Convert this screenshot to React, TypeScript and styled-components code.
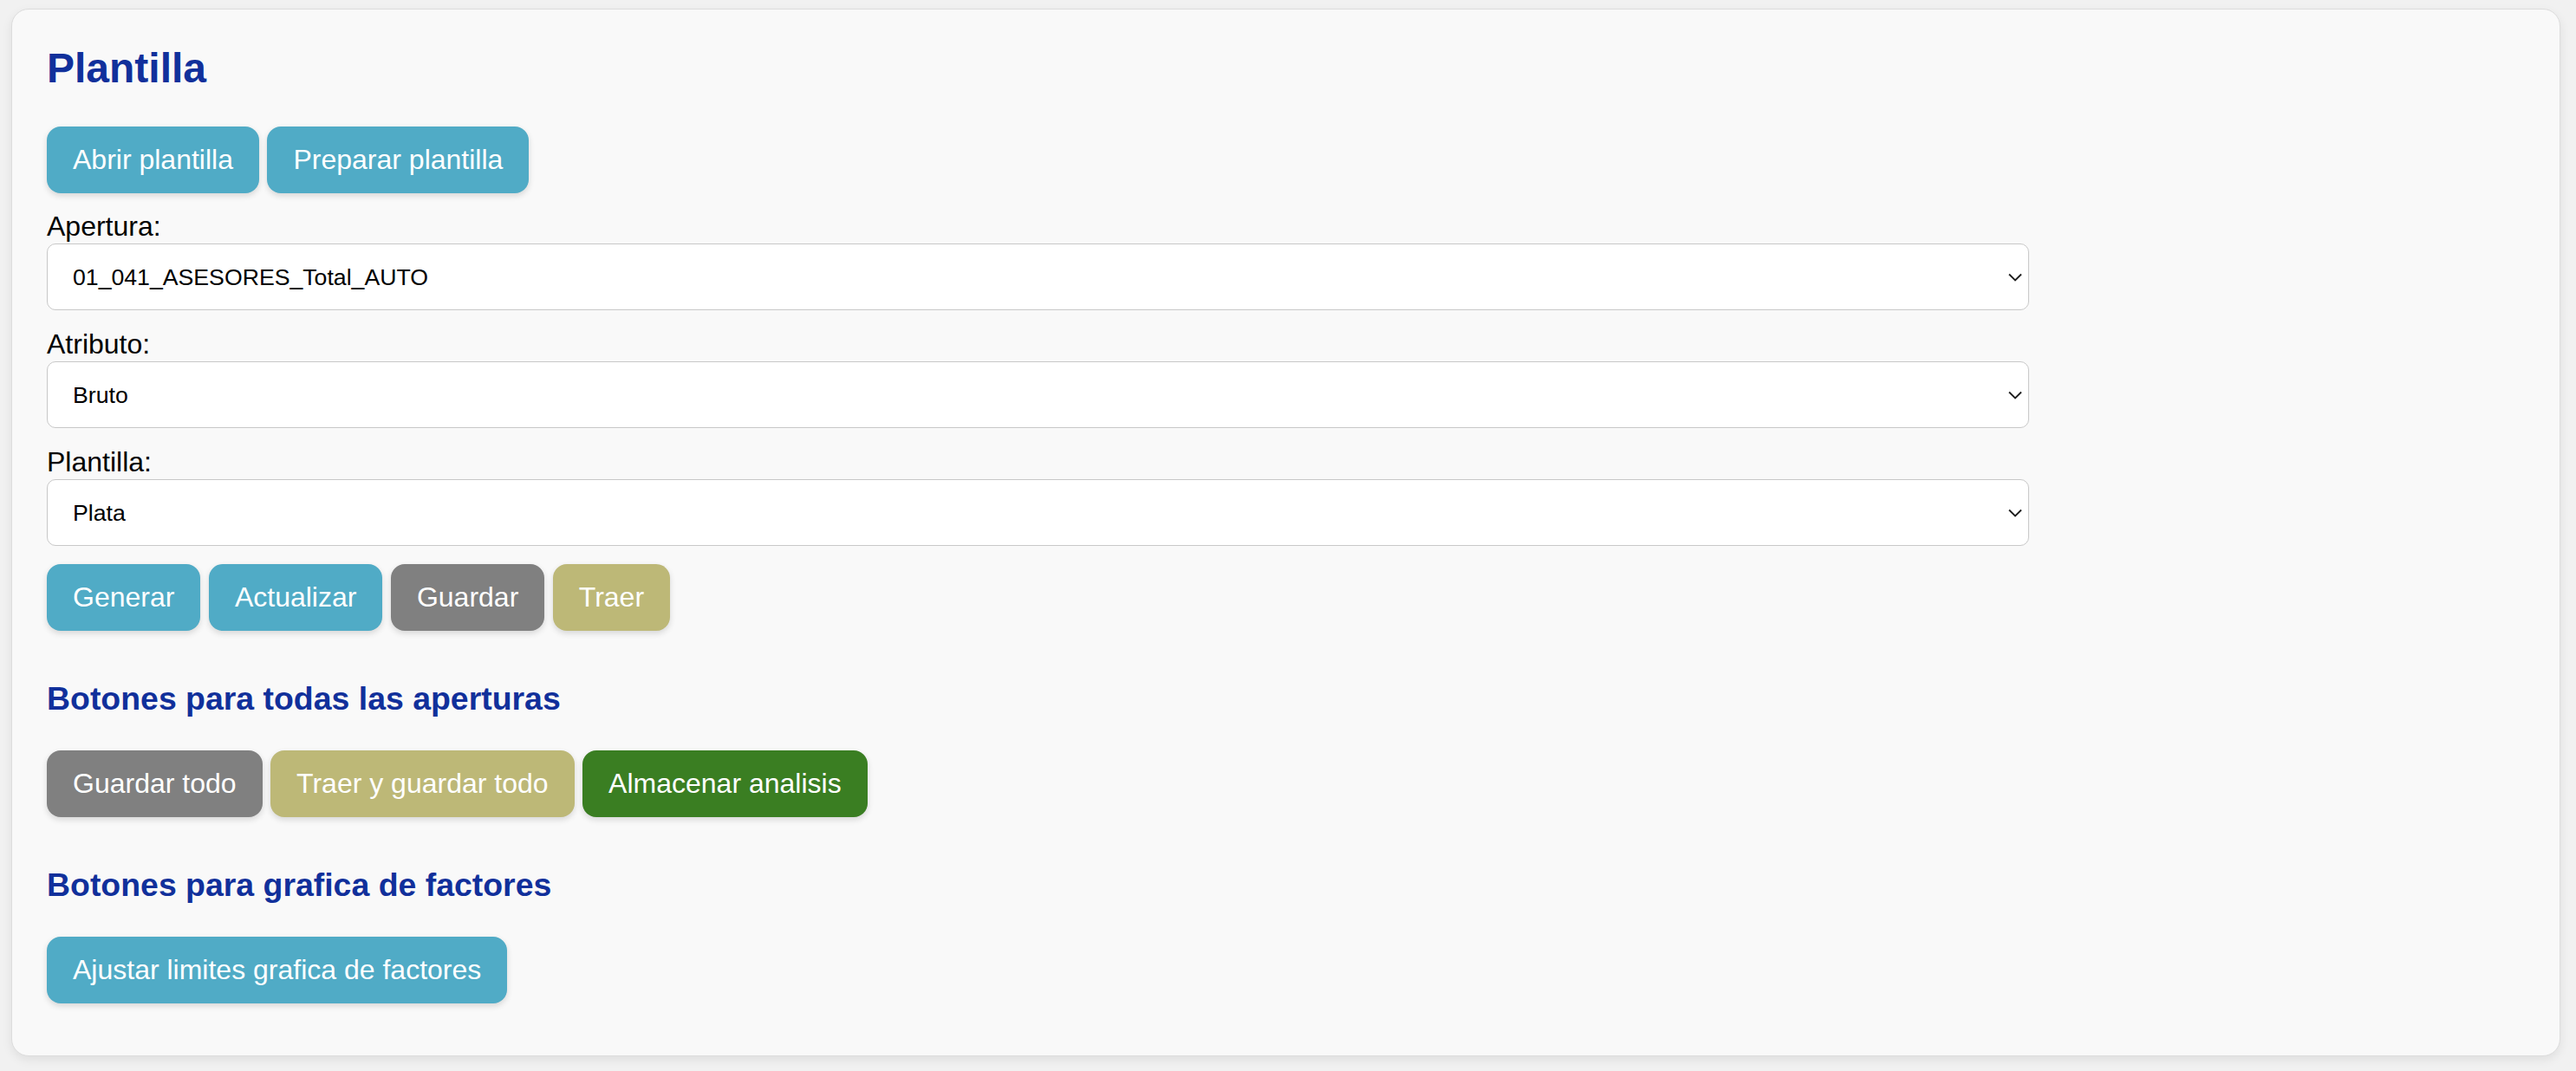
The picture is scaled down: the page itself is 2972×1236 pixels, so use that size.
import React from "react";
import styled, { createGlobalStyle } from "styled-components";

const GlobalStyle = createGlobalStyle`
  html, body {
    margin: 0;
    padding: 0;
    background: #f1f1f1;
  }
  body {
    font-family: "Liberation Sans", Arial, Helvetica, sans-serif;
    color: #000;
  }
`;

const Page = styled.div`
  padding: 10px 18px 19px 13px;
`;

const Card = styled.section`
  display: flex;
  flex-direction: column;
  align-items: stretch;
  background: #f9f9f9;
  border: 1px solid #dddddd;
  border-radius: 20px;
  padding: 40px;
  box-shadow: 0 4px 12px rgba(0, 0, 0, 0.08);
`;

const Title = styled.h2`
  margin: 0 0 40px;
  font-size: 48px;
  font-weight: bold;
  line-height: normal;
  color: #11309b;
`;

const SectionTitle = styled.h3`
  margin: 37.44px 0;
  font-size: 37.44px;
  font-weight: bold;
  line-height: normal;
  color: #11309b;
`;

const ButtonRow = styled.div`
  display: flex;
  flex-wrap: wrap;
  gap: 9.5px;
  margin-bottom: 20px;
`;

type Tone = "teal" | "gray" | "khaki" | "green";

const toneColors: Record<Tone, string> = {
  teal: "#50abc6",
  gray: "#808080",
  khaki: "#bdb877",
  green: "#3a7e22",
};

const Button = styled.button<{ $tone: Tone }>`
  font-family: "Liberation Sans", Arial, Helvetica, sans-serif;
  font-size: 32px;
  line-height: 37px;
  padding: 20px 30px;
  border: none;
  border-radius: 16px;
  color: #ffffff;
  background: ${(p) => toneColors[p.$tone]};
  box-shadow: 0 3px 7px rgba(0, 0, 0, 0.14);
  cursor: pointer;
  white-space: nowrap;
`;

const FieldLabel = styled.label`
  display: block;
  font-size: 32px;
  line-height: normal;
  margin: 0 0 1px;
`;

const SelectWrap = styled.div`
  position: relative;
  width: 80%;
  margin-bottom: 21px;
`;

const Select = styled.select`
  display: block;
  width: 100%;
  height: 77px;
  box-sizing: border-box;
  appearance: none;
  -webkit-appearance: none;
  background: #ffffff;
  border: 1.5px solid #c8c8c8;
  border-radius: 10px;
  padding: 0 60px 0 29px;
  font-family: "Liberation Sans", Arial, Helvetica, sans-serif;
  font-size: 26.67px;
  color: #000;
  outline: none;
`;

const Chevron = styled.svg`
  position: absolute;
  right: 8px;
  top: 50%;
  width: 16px;
  height: 10px;
  margin-top: -5px;
  pointer-events: none;
`;

const ChevronIcon = () => (
  <Chevron viewBox="0 0 16 10" aria-hidden="true">
    <path d="M1 1.5 L8 8.5 L15 1.5" fill="none" stroke="#1e1e1e" strokeWidth="1.9" />
  </Chevron>
);

const Field = ({ label, id, value }: { label: string; id: string; value: string }) => (
  <>
    <FieldLabel htmlFor={id}>{label}</FieldLabel>
    <SelectWrap>
      <Select id={id} defaultValue={value}>
        <option value={value}>{value}</option>
      </Select>
      <ChevronIcon />
    </SelectWrap>
  </>
);

export default function App() {
  return (
    <>
      <GlobalStyle />
      <Page>
        <Card>
          <Title>Plantilla</Title>
          <ButtonRow>
            <Button $tone="teal">Abrir plantilla</Button>
            <Button $tone="teal">Preparar plantilla</Button>
          </ButtonRow>

          <Field label="Apertura:" id="apertura" value="01_041_ASESORES_Total_AUTO" />
          <Field label="Atributo:" id="atributo" value="Bruto" />
          <Field label="Plantilla:" id="plantilla" value="Plata" />

          <ButtonRow>
            <Button $tone="teal">Generar</Button>
            <Button $tone="teal">Actualizar</Button>
            <Button $tone="gray">Guardar</Button>
            <Button $tone="khaki">Traer</Button>
          </ButtonRow>

          <SectionTitle>Botones para todas las aperturas</SectionTitle>
          <ButtonRow>
            <Button $tone="gray">Guardar todo</Button>
            <Button $tone="khaki">Traer y guardar todo</Button>
            <Button $tone="green">Almacenar analisis</Button>
          </ButtonRow>

          <SectionTitle>Botones para grafica de factores</SectionTitle>
          <ButtonRow>
            <Button $tone="teal">Ajustar limites grafica de factores</Button>
          </ButtonRow>
        </Card>
      </Page>
    </>
  );
}
